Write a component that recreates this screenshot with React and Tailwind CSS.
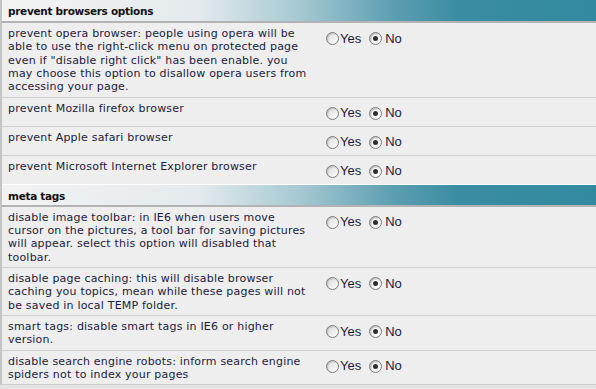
import React from "react";

const sections = [
  {
    title: "prevent browsers options",
    rows: [
      [
        "prevent opera browser: people using opera will be",
        "able to use the right-click menu on protected page",
        'even if "disable right click" has been enable. you',
        "may choose this option to disallow opera users from",
        "accessing your page.",
      ],
      ["prevent Mozilla firefox browser"],
      ["prevent Apple safari browser"],
      ["prevent Microsoft Internet Explorer browser"],
    ],
  },
  {
    title: "meta tags",
    rows: [
      [
        "disable image toolbar: in IE6 when users move",
        "cursor on the pictures, a tool bar for saving pictures",
        "will appear. select this option will disabled that",
        "toolbar.",
      ],
      [
        "disable page caching: this will disable browser",
        "caching you topics, mean while these pages will not",
        "be saved in local TEMP folder.",
      ],
      ["smart tags: disable smart tags in IE6 or higher", "version."],
      [
        "disable search engine robots: inform search engine",
        "spiders not to index your pages",
      ],
    ],
  },
];

function Radio({ checked }) {
  return (
    <span className="relative inline-flex h-[13px] w-[13px] items-center justify-center rounded-full border border-[#7b7b7b] bg-gradient-to-br from-[#d9d9d9] to-[#ffffff] shadow-[inset_1px_1px_1px_rgba(0,0,0,0.15)]">
      {checked && (
        <span className="h-[5px] w-[5px] rounded-full bg-[#2e2e2e] shadow-[0_0_0_1px_rgba(255,255,255,0.8)]" />
      )}
    </span>
  );
}

function Header({ title, first }) {
  return (
    <div
      className={`h-[23px] border-b-2 border-b-[#b3b3b3] bg-[linear-gradient(to_right,#f3f3f3_0%,#e4eaed_33%,#a6c9d3_50%,#5c9eb1_66%,#3a8ca2_77%,#338aa0_100%)] pl-[6px] pt-[5px] text-[10.5px] font-bold leading-[13px] tracking-[-0.3px] text-[#111111] ${
        first ? "" : "border-t border-t-white"
      }`}
    >
      {title}
    </div>
  );
}

function Row({ lines, last }) {
  return (
    <div
      className={`flex bg-[#eeeeee] ${
        last ? "" : "border-b border-[#cdcdcd]"
      }`}
    >
      <div className="w-[318px] shrink-0 pb-[3px] pl-[6px] pt-[4px] text-[11px] leading-[13.33px] tracking-[0.2px] text-[#1b1b3a]">
        {lines.map((l, i) => (
          <div key={i} className="whitespace-nowrap">
            {l}
          </div>
        ))}
      </div>
      <div className="flex flex-1 items-start pb-[6px] pl-[6px] pt-[9px]">
        <div className="flex h-[13px] items-center font-['Liberation_Sans',Arial,sans-serif] text-[13px] text-[#1b1b3a]">
          <Radio />
          <span className="ml-[1px]">Yes</span>
          <span className="ml-[8px] inline-flex">
            <Radio checked />
          </span>
          <span className="ml-[3px]">No</span>
        </div>
      </div>
    </div>
  );
}

export default function App() {
  return (
    <div className="flex h-[389px] w-[596px] flex-col overflow-hidden bg-[#e2e2e2] font-['DejaVu_Sans',Verdana,sans-serif]">
      <div className="border-l-2 border-[#c4c4c4]">
        {sections.map((s, si) => (
          <div key={si}>
            <Header title={s.title} first={si === 0} />
            {s.rows.map((r, ri) => (
              <Row
                key={ri}
                lines={r}
                last={si === 0 && ri === s.rows.length - 1}
              />
            ))}
          </div>
        ))}
      </div>
    </div>
  );
}
